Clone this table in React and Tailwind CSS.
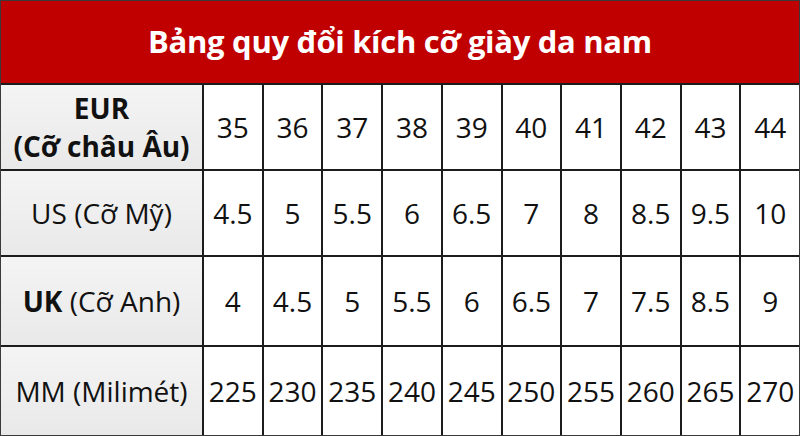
const rows = [
  { label: <span className="font-bold leading-[38px]">EUR<br />(Cỡ châu Âu)</span>, values: ["35", "36", "37", "38", "39", "40", "41", "42", "43", "44"] },
  { label: <span>US (Cỡ Mỹ)</span>, values: ["4.5", "5", "5.5", "6", "6.5", "7", "8", "8.5", "9.5", "10"] },
  { label: <span><b className="font-bold">UK</b> (Cỡ Anh)</span>, values: ["4", "4.5", "5", "5.5", "6", "6.5", "7", "7.5", "8.5", "9"] },
  { label: <span>MM (Milimét)</span>, values: ["225", "230", "235", "240", "245", "250", "255", "260", "265", "270"] },
];

export default function App() {
  return (
    <div className="w-[800px] h-[436px] flex flex-col border border-[#3a3a3a] bg-[#1c1c1c] font-['Open_Sans',sans-serif] text-[#111]">
      <div className="h-[82px] shrink-0 bg-[#c00000] flex items-center justify-center pb-[2px]">
        <h1 className="text-white font-bold text-[31px] tracking-[-0.3px]">Bảng quy đổi kích cỡ giày da nam</h1>
      </div>
      <div className="flex-1 grid grid-cols-[201px_repeat(10,minmax(0,1fr))] grid-rows-[84px_84px_88px_1fr] gap-[2px] pt-[2px]">
        {rows.map((row, i) => (
          <Row key={i} label={row.label} values={row.values} />
        ))}
      </div>
    </div>
  );
}

function Row({ label, values }) {
  return (
    <>
      <div className="bg-gradient-to-b from-[#f4f4f4] to-[#e9e9e9] flex items-center justify-center text-center text-[28px] leading-tight">
        {label}
      </div>
      {values.map((v, j) => (
        <div key={j} className="bg-white flex items-center justify-center text-[28px]">
          {v}
        </div>
      ))}
    </>
  );
}
